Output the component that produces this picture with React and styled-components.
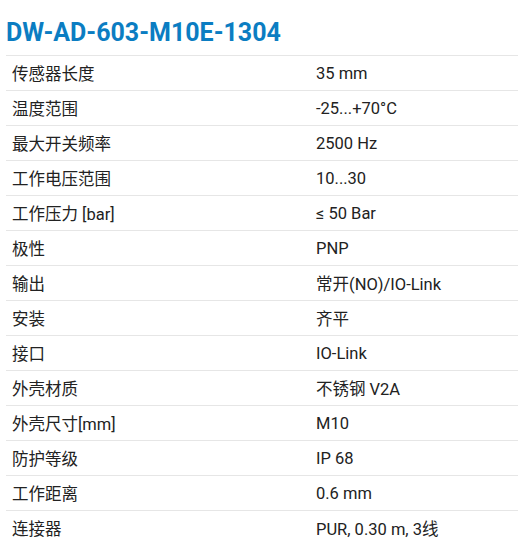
import React from 'react';
import styled, { createGlobalStyle } from 'styled-components';

const specs = [
    ['传感器长度', '35 mm'],
    ['温度范围', '-25...+70°C'],
    ['最大开关频率', '2500 Hz'],
    ['工作电压范围', '10...30'],
    ['工作压力 [bar]', '≤ 50 Bar'],
    ['极性', 'PNP'],
    ['输出', '常开(NO)/IO-Link'],
    ['安装', '齐平'],
    ['接口', 'IO-Link'],
    ['外壳材质', '不锈钢 V2A'],
    ['外壳尺寸[mm]', 'M10'],
    ['防护等级', 'IP 68'],
    ['工作距离', '0.6 mm'],
    ['连接器', 'PUR, 0.30 m, 3线'],
];

const GlobalStyle = createGlobalStyle`
    body {
        margin: 0;
        background: #fff;
        font-family: Roboto, "Noto Sans CJK SC", sans-serif;
    }
`;

const Page = styled.div`
    padding: 0 0 0 6px;
    overflow: hidden;
    height: 542px;
`;

const Title = styled.h1`
    margin: 0;
    height: 55px;
    display: flex;
    align-items: flex-end;
    padding-bottom: 7px;
    box-sizing: border-box;
    font-size: 25px;
    line-height: 30px;
    font-weight: 700;
    color: #0b7dc2;
`;

const Table = styled.div`
    border-top: 1px solid #e6e6e6;
`;

const Row = styled.div`
    display: grid;
    grid-template-columns: 304px 1fr;
    height: 35px;
    align-items: center;
    border-bottom: 1px solid #e6e6e6;
    box-sizing: border-box;
    font-size: 16.5px;
    color: #222;
`;

const Cell = styled.div`
    padding-left: 6px;
    white-space: nowrap;
`;

const App = () => {
    return (
        <Page>
            <GlobalStyle />
            <Title>DW-AD-603-M10E-1304</Title>
            <Table>
                {specs.map(([label, value]) => (
                    <Row key={label}>
                        <Cell>{label}</Cell>
                        <Cell>{value}</Cell>
                    </Row>
                ))}
            </Table>
        </Page>
    );
};

export default App;
